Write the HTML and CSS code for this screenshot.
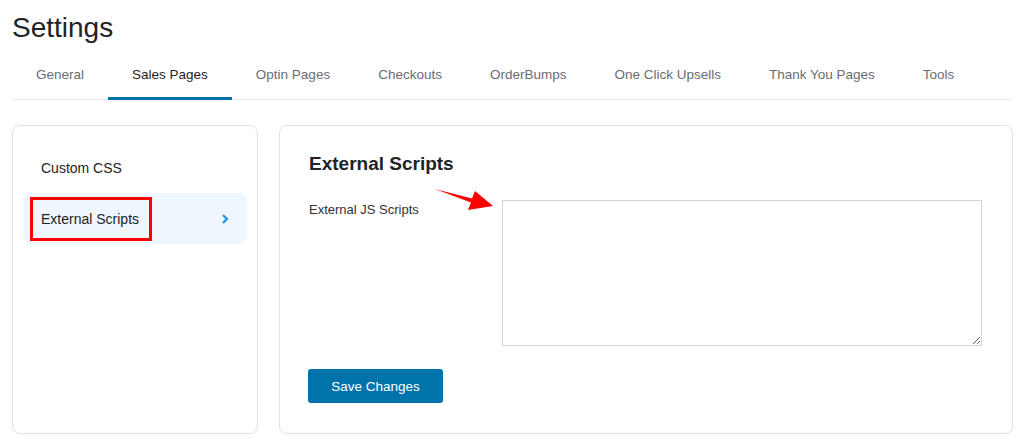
FILE: index.html
```html
<!DOCTYPE html>
<html>
<head>
<meta charset="utf-8">
<link rel="stylesheet" href="styles.css">
</head>
<body>
  <h1 class="page-title">Settings</h1>
  <nav class="tabs">
    <a class="tab">General</a>
    <a class="tab active">Sales Pages</a>
    <a class="tab">Optin Pages</a>
    <a class="tab">Checkouts</a>
    <a class="tab">OrderBumps</a>
    <a class="tab">One Click Upsells</a>
    <a class="tab">Thank You Pages</a>
    <a class="tab">Tools</a>
  </nav>
  <div class="layout">
    <aside class="card sidebar">
      <div class="side-item">Custom CSS</div>
      <div class="side-item current">
        <span>External Scripts</span>
        <svg class="chev" width="8" height="12" viewBox="0 0 8 12"><polyline points="2,2 6,6 2,10" fill="none" stroke="#1e96e6" stroke-width="2.2"/></svg>
        <span class="highlight-box"></span>
      </div>
    </aside>
    <section class="card main">
      <h2 class="section-title">External Scripts</h2>
      <div class="field-row">
        <label class="field-label">External JS Scripts</label>
        <textarea class="field-input"></textarea>
      </div>
      <button class="btn-primary">Save Changes</button>
    </section>
  </div>
  <svg class="arrow" width="1024" height="448" viewBox="0 0 1024 448">
    <polygon points="435,189 472,198.5 475,191 493,206 468,210 471,202.5" fill="#ff0000"/>
  </svg>
</body>
</html>
```
FILE: styles.css
```css
* { box-sizing: border-box; }
html, body { margin: 0; }
body {
  position: relative;
  width: 1024px;
  height: 448px;
  padding: 0 12px;
  background: #ffffff;
  font-family: "Liberation Sans", Arial, sans-serif;
  color: #1d2327;
  overflow: hidden;
}
.page-title {
  margin: 11px 0 0;
  font-size: 28px;
  line-height: 34px;
  font-weight: 400;
  color: #1d2327;
}
.tabs {
  display: flex;
  border-bottom: 1px solid #e6e5ef;
}
.tab {
  padding: 20px 24px 12px;
  font-size: 13.5px;
  line-height: 20px;
  color: #6b6b78;
  border-bottom: 3px solid transparent;
  margin-bottom: -1px;
}
.tab.active {
  color: #1d2327;
  border-bottom-color: #0073aa;
}
.layout {
  display: grid;
  grid-template-columns: 246px 1fr;
  gap: 21px;
  margin-top: 25px;
}
.card {
  height: 309px;
  border: 1px solid #e1e0ee;
  border-radius: 8px;
  background: #fff;
}
.sidebar {
  padding: 16px 10px 0 11px;
}
.side-item {
  position: relative;
  display: flex;
  align-items: center;
  justify-content: space-between;
  height: 51px;
  padding: 0 18px 0 17px;
  border-radius: 8px;
  font-size: 14px;
  color: #1d2327;
}
.side-item.current {
  background: #eef7fe;
}
.chev { display: block; }
.highlight-box {
  position: absolute;
  left: 6px;
  top: 4px;
  width: 122px;
  height: 44px;
  border: 3px solid #ff0000;
}
.main {
  padding: 26px 30px 0 29px;
}
.section-title {
  margin: 0 0 24px;
  font-size: 19px;
  line-height: 24px;
  font-weight: 700;
  color: #1d2327;
}
.field-row {
  display: grid;
  grid-template-columns: 193px 1fr;
}
.field-label {
  font-size: 13px;
  line-height: 20px;
  color: #2c3338;
}
.field-input {
  display: block;
  width: 480px;
  height: 146px;
  margin: 0;
  border: 1px solid #d4d4d8;
  border-radius: 0;
  background: #fff;
}
.btn-primary {
  display: block;
  margin-top: 23px;
  margin-left: -1px;
  width: 135px;
  height: 34px;
  border: none;
  border-radius: 3px;
  background: #0073aa;
  color: #fff;
  font-family: "Liberation Sans", Arial, sans-serif;
  font-size: 13.5px;
}
.arrow {
  position: absolute;
  left: 0;
  top: 0;
  pointer-events: none;
}
```
